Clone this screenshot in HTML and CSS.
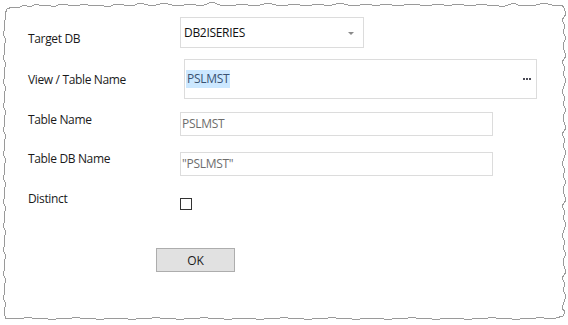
FILE: index.html
```html
<!DOCTYPE html>
<html lang="en">

<head>
    <meta charset="UTF-8">
    <meta name="viewport" content="width=device-width, initial-scale=1.0">
    <title>Table Properties</title>
    <link rel="stylesheet" href="styles.css">
</head>

<body>
    <div class="dialog">
        <svg class="torn-edge" width="568" height="325" viewBox="0 0 568 325">
            <polyline points="5,14 7,9 12,7 18,8 24,5 30,7 36,4 42,6 48,5 54,7 60,4 68,5 76,6 84,4 92,6 100,5 108,7 116,4 124,5 132,6 140,3 148,5 156,5 164,3 172,5 180,6 188,4 196,5 204,5 212,2 220,5 228,6 236,5 244,4 252,6 260,5 268,3 276,5 284,6 292,4 300,5 308,6 316,4 324,5 332,5 340,3 348,5 356,6 364,4 372,5 380,5 388,4 396,6 404,5 412,4 420,5 428,6 436,4 444,5 452,5 460,4 468,6 476,5 484,4 490,6 496,5 502,7 508,5 514,3 520,6 528,5 536,5 544,3 552,5 558,6 562,5 564,8
            566,14 562,20 565,26 563,32 566,38 563,44 564,50 566,56 562,62 565,68 563,74 566,80 564,86 562,92 565,98 563,104 566,110 563,116 564,122 566,128 562,134 565,140 563,146 566,152 564,158 562,164 565,170 563,176 566,182 563,188 564,194 566,200 562,206 565,212 563,218 566,224 564,230 562,236 565,242 563,248 566,254 563,260 564,266 566,272 562,278 565,284 563,290 566,296 564,302 562,308 565,312 563,316
            556,318 548,319 540,317 532,319 524,318 516,320 508,318 500,319 492,317 484,319 476,318 468,320 460,318 452,319 444,318 436,320 428,318 420,319 412,317 404,319 396,318 388,320 380,318 372,319 364,318 356,320 348,318 340,319 332,317 324,319 316,318 308,320 300,318 292,319 284,317 276,319 268,318 260,320 252,318 244,319 236,318 228,320 220,318 212,319 204,317 196,319 188,318 180,320 172,318 164,319 156,317 148,319 140,318 132,320 124,318 116,319 108,318 100,320 92,318 84,319 76,317 68,319 60,318 52,320 44,318 36,319 28,317 20,319 12,318 6,319 5,316
            4,310 6,304 3,298 5,292 4,286 6,280 3,274 5,268 4,262 6,256 3,250 5,244 4,238 6,232 3,226 5,220 4,214 6,208 3,202 5,196 4,190 6,184 3,178 5,172 4,166 6,160 3,154 5,148 4,142 6,136 3,130 5,124 4,118 6,112 3,106 5,100 4,94 6,88 3,82 5,76 4,70 6,64 3,58 5,52 4,46 6,40 3,34 5,28 4,22 6,18 5,14" />
        </svg>

        <div class="row row-target">
            <label class="label">Target DB</label>
            <div class="combo">
                <span>DB2ISERIES</span>
                <span class="arrow"></span>
            </div>
        </div>

        <div class="row row-view">
            <label class="label">View / Table Name</label>
            <div class="picker">
                <span class="selected">PSLMST</span>
                <svg class="dots" width="8" height="2" viewBox="0 0 8 2">
                    <rect x="0" y="0" width="2" height="2" />
                    <rect x="3" y="0" width="2" height="2" />
                    <rect x="6" y="0" width="2" height="2" />
                </svg>
            </div>
        </div>

        <div class="row row-table">
            <label class="label">Table Name</label>
            <div class="textbox">PSLMST</div>
        </div>

        <div class="row row-dbname">
            <label class="label">Table DB Name</label>
            <div class="textbox">"PSLMST"</div>
        </div>

        <div class="row row-distinct">
            <label class="label">Distinct</label>
            <span class="checkbox"></span>
        </div>

        <button class="ok-btn">OK</button>
    </div>
</body>

</html>
```

FILE: styles.css
```css
/* General Styles */
body {
    margin: 0;
    padding: 0;
    background-color: #fff;
    font-family: 'Open Sans', 'Noto Sans', Arial, sans-serif;
    font-size: 12px;
    color: #1a1a1a;
}

.dialog {
    position: relative;
    width: 568px;
    height: 325px;
    box-sizing: border-box;
    padding: 17px 0 0 28px;
    overflow: hidden;
}

.torn-edge {
    position: absolute;
    left: 0;
    top: 0;
}

.torn-edge polyline {
    fill: none;
    stroke: #9a9a9a;
    stroke-width: 1;
    shape-rendering: crispEdges;
}

.row {
    display: flex;
    align-items: flex-start;
}

.label {
    width: 152px;
    flex-shrink: 0;
    line-height: 16px;
    letter-spacing: -0.35px;
}

/* Target DB */
.row-target .label {
    padding-top: 14px;
}

.combo {
    width: 184px;
    height: 31px;
    box-sizing: border-box;
    border: 1px solid #dcdcdc;
    display: flex;
    align-items: center;
    justify-content: space-between;
    padding: 0 9px 0 3px;
    color: #111;
    letter-spacing: -0.3px;
}

.combo .arrow {
    width: 0;
    height: 0;
    border-left: 3px solid transparent;
    border-right: 3px solid transparent;
    border-top: 3px solid #8a8a8a;
    margin-top: 1px;
}

/* View / Table Name */
.row-view {
    margin-top: 11px;
}

.row-view .label {
    padding-top: 13px;
}

.picker {
    width: 353px;
    height: 40px;
    margin-left: 4px;
    box-sizing: border-box;
    border: 1px solid #dcdcdc;
    display: flex;
    align-items: center;
    justify-content: space-between;
    padding: 0 5px 0 1px;
}

.picker .selected {
    background-color: #cce8ff;
    color: #3a5272;
    line-height: 18px;
    padding: 0 1px;
    letter-spacing: -0.3px;
}

.dots rect {
    fill: #4a4a55;
}

/* Read-only text boxes */
.row-table {
    margin-top: 13px;
}

.row-dbname {
    margin-top: 16px;
}

.row-dbname .label {
    margin-top: -1px;
}

.textbox {
    width: 313px;
    height: 24px;
    box-sizing: border-box;
    border: 1px solid #dcdcdc;
    padding: 0 1px;
    line-height: 22px;
    color: #6d6d6d;
    letter-spacing: -0.3px;
}

/* Distinct */
.row-distinct {
    margin-top: 15px;
}

.checkbox {
    width: 12px;
    height: 12px;
    box-sizing: border-box;
    border: 1px solid #333;
    margin-top: 7px;
}

.ok-btn {
    display: block;
    margin: 38px 0 0 128px;
    width: 79px;
    height: 24px;
    background-color: #e1e1e1;
    border: 1px solid #adadad;
    border-radius: 0;
    font-family: inherit;
    font-size: 12px;
    color: #1a1a1a;
    padding: 0;
}
```
